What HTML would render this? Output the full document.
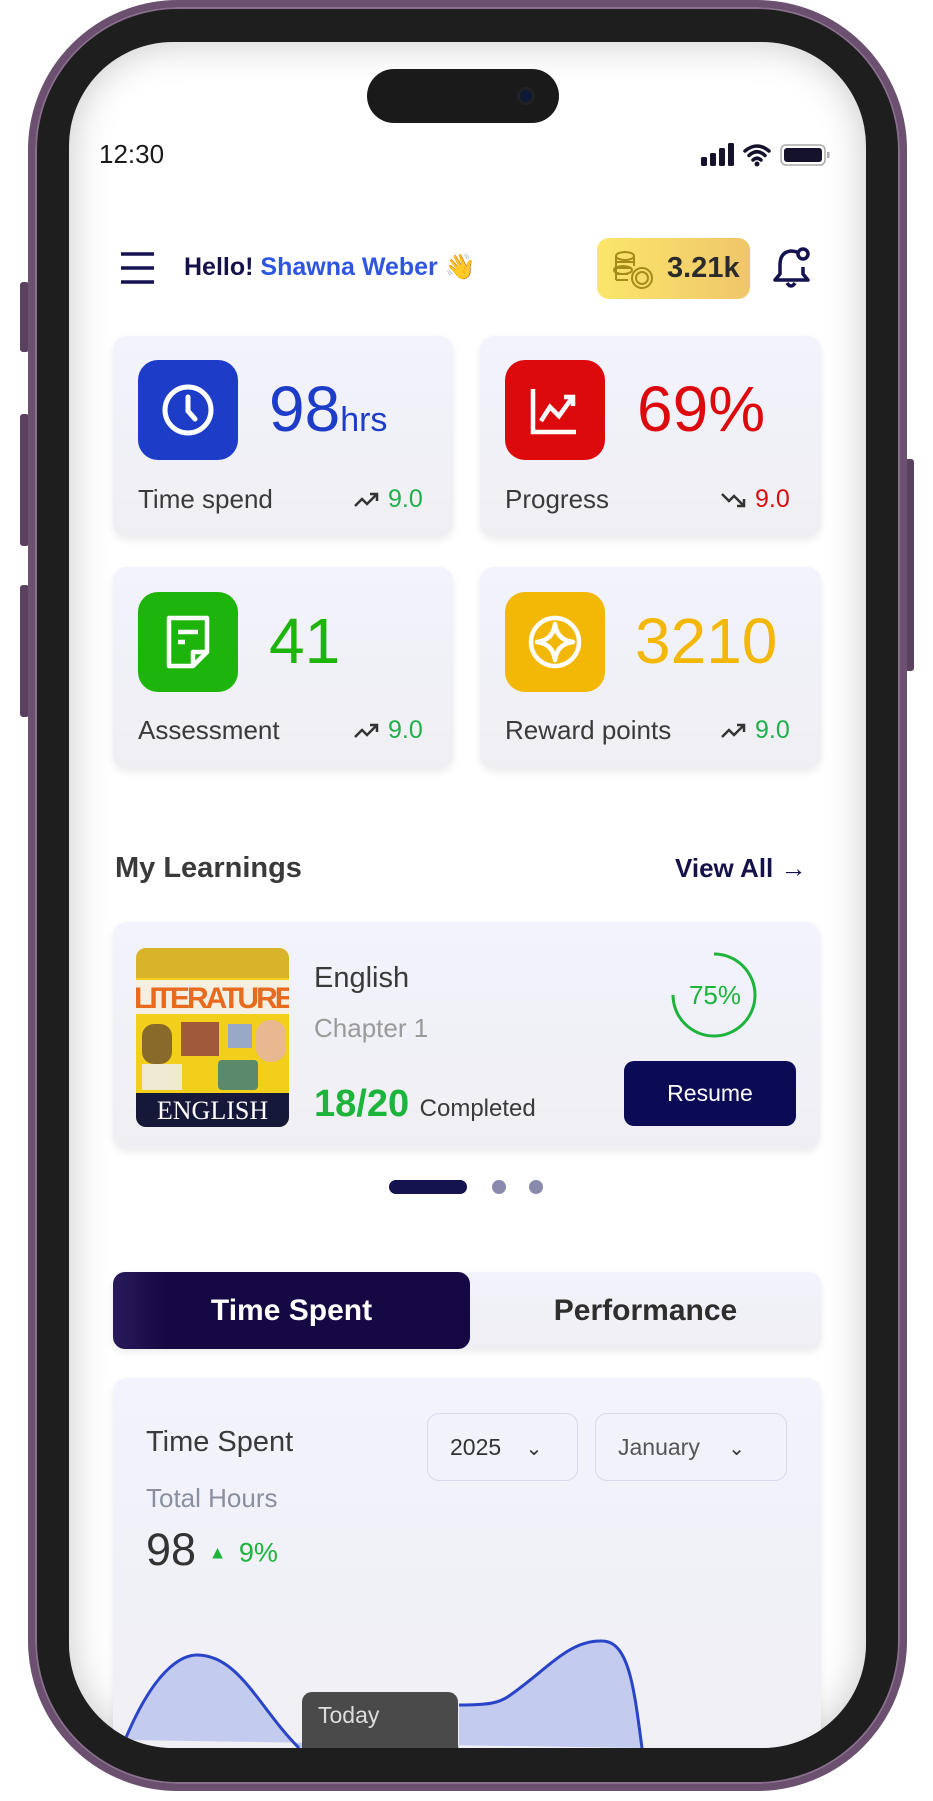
<!DOCTYPE html>
<html><head><meta charset="utf-8"><style>
*{margin:0;padding:0;box-sizing:border-box}
body{width:933px;height:1801px;background:#fff;position:relative;overflow:hidden;font-family:"Liberation Sans",sans-serif}
.abs{position:absolute}
.frame{left:28px;top:0;width:879px;height:1791px;border-radius:150px;background:#1e1e1e;border:7px solid #6b5070;box-shadow:inset 0 0 0 2px #8a6e8e}
.btn{background:#5b4160;border-radius:3px}
.screen{left:69px;top:42px;width:797px;height:1706px;border-radius:104px;background:#fff;overflow:hidden;box-shadow:inset 0 0 40px rgba(0,0,0,.22)}
.card{background:linear-gradient(#f2f3fc,#efeff3);border-radius:14px;box-shadow:0 3px 8px rgba(0,0,0,.08)}
.ib{width:100px;height:100px;border-radius:20px;display:flex;align-items:center;justify-content:center}
.num{font-size:64px;line-height:1}
.lbl{font-size:26px;color:#3a3a3a}
.trend{font-size:25px;display:flex;align-items:center;gap:8px}
</style></head><body>
<div class="abs btn" style="left:20px;top:282px;width:9px;height:70px"></div>
<div class="abs btn" style="left:20px;top:414px;width:9px;height:132px"></div>
<div class="abs btn" style="left:20px;top:585px;width:9px;height:132px"></div>
<div class="abs btn" style="left:905px;top:459px;width:9px;height:212px"></div>
<div class="abs frame"></div>
<div class="abs screen">
<div class="abs" style="left:298px;top:27px;width:192px;height:54px;border-radius:27px;background:#1a1a1a"></div>
<div class="abs" style="left:448px;top:45px;width:18px;height:18px;border-radius:50%;background:#0d1a35;border:3px solid #222"></div>
<div class="abs" style="left:30px;top:97px;font-size:26px;color:#1a1a1a">12:30</div>
<svg class="abs" style="left:632px;top:100px" width="146" height="26" viewBox="0 0 146 26">
<rect x="0" y="15" width="6" height="9" rx="1.5" fill="#15122b"/><rect x="9" y="11" width="6" height="13" rx="1.5" fill="#15122b"/><rect x="18" y="6" width="6" height="18" rx="1.5" fill="#15122b"/><rect x="27" y="1" width="6" height="23" rx="1.5" fill="#15122b"/>
<path d="M44 9 Q56 -1 68 9 M48 13.5 Q56 6 64 13.5 M52 18 Q56 14.5 60 18" stroke="#15122b" stroke-width="3.5" fill="none" stroke-linecap="round"/><circle cx="56" cy="22" r="2.5" fill="#15122b"/>
<rect x="80" y="3" width="44" height="20" rx="5" fill="none" stroke="#aaa" stroke-width="1.5"/><rect x="83" y="6" width="38" height="14" rx="3" fill="#15122b"/><rect x="126" y="10" width="2.5" height="6" fill="#aaa"/>
</svg>
<svg class="abs" style="left:50px;top:209px" width="37" height="34"><path d="M2 3h33M2 17h33M2 31h33" stroke="#14124f" stroke-width="3.5"/></svg>
<div class="abs" style="left:115px;top:211px;font-size:25px;font-weight:bold;color:#15124a">Hello! <span style="color:#2f56e0">Shawna Weber</span> 👋</div>
<div class="abs" style="left:528px;top:196px;width:153px;height:61px;border-radius:12px;background:linear-gradient(90deg,#fbe66a,#efc66a)"></div>
<svg class="abs" style="left:541px;top:208px" width="46" height="40" viewBox="0 0 46 40" fill="none" stroke="#a48a18" stroke-width="2"><ellipse cx="15" cy="6" rx="9" ry="4"/><path d="M6 6v24M24 6v10M6 12h18M6 18h14M6 24h12M6 30h12"/><ellipse cx="13" cy="20" rx="9" ry="4"/><circle cx="32" cy="28" r="10"/><circle cx="32" cy="28" r="6"/></svg>
<div class="abs" style="left:598px;top:210px;font-size:29px;font-weight:bold;color:#2b2b2b">3.21k</div>
<svg class="abs" style="left:704px;top:203px" width="40" height="46" viewBox="0 0 40 46" fill="none" stroke="#14124f" stroke-width="3.5"><path d="M24 7 Q20 6 18 6 Q7 7 7 20v9l-5 6h33l-5-6v-7" stroke-linejoin="round"/><path d="M14 38q4 6 8 0"/><circle cx="30" cy="9" r="5"/></svg>

<div class="abs card" style="left:44px;top:294px;width:340px;height:201px"></div>
<div class="abs card" style="left:411px;top:294px;width:341px;height:201px"></div>
<div class="abs card" style="left:44px;top:525px;width:340px;height:202px"></div>
<div class="abs card" style="left:411px;top:525px;width:341px;height:202px"></div>
<div class="abs ib" style="left:69px;top:318px;background:#1d3dc9"><svg width="56" height="56" viewBox="0 0 56 56" fill="none" stroke="#fff" stroke-width="5"><circle cx="28" cy="28" r="23"/><path d="M28 15v14l7 8" stroke-linecap="round"/></svg></div>
<div class="abs num" style="left:200px;top:335px;color:#1d3dc9">98<span style="font-size:34px">hrs</span></div>
<div class="abs lbl" style="left:69px;top:442px">Time spend</div>
<div class="abs trend" style="left:285px;top:443px;color:#1fb04a"><svg width="26" height="16" viewBox="0 0 26 16" fill="none" stroke="#333" stroke-width="2.5"><path d="M1 14l7-7 5 5 10-10M16 2h7v7"/></svg>9.0</div>

<div class="abs ib" style="left:436px;top:318px;background:#dd0a0d"><svg width="54" height="54" viewBox="0 0 54 54" fill="none" stroke="#fff" stroke-width="4.5"><path d="M5 6v43h43"/><path d="M13 38l9-14 9 9 13-18M36 14h9v9"/></svg></div>
<div class="abs num" style="left:568px;top:335px;color:#dd0a0d">69%</div>
<div class="abs lbl" style="left:436px;top:442px">Progress</div>
<div class="abs trend" style="left:652px;top:443px;color:#dd0a0d"><svg width="26" height="16" viewBox="0 0 26 16" fill="none" stroke="#333" stroke-width="2.5"><path d="M1 2l7 7 5-5 10 10M16 14h7V7"/></svg>9.0</div>

<div class="abs ib" style="left:69px;top:550px;background:#1db40c"><svg width="50" height="56" viewBox="0 0 50 56" fill="none" stroke="#fff" stroke-width="4.5" stroke-linejoin="round"><path d="M6 4h38v34L30 52H6z M30 52V38h14"/><path d="M15 18h20M15 28h7"/></svg></div>
<div class="abs num" style="left:200px;top:567px;color:#1db40c">41</div>
<div class="abs lbl" style="left:69px;top:673px">Assessment</div>
<div class="abs trend" style="left:285px;top:674px;color:#1fb04a"><svg width="26" height="16" viewBox="0 0 26 16" fill="none" stroke="#333" stroke-width="2.5"><path d="M1 14l7-7 5 5 10-10M16 2h7v7"/></svg>9.0</div>

<div class="abs ib" style="left:436px;top:550px;background:#f3b705"><svg width="56" height="56" viewBox="0 0 56 56" fill="none" stroke="#fff" stroke-width="4.5"><circle cx="28" cy="28" r="24"/><path d="M28 10Q30 26 46 28Q30 30 28 46Q26 30 10 28Q26 26 28 10z" stroke-linejoin="round"/></svg></div>
<div class="abs num" style="left:566px;top:567px;color:#f3b705">3210</div>
<div class="abs lbl" style="left:436px;top:673px">Reward points</div>
<div class="abs trend" style="left:652px;top:674px;color:#1fb04a"><svg width="26" height="16" viewBox="0 0 26 16" fill="none" stroke="#333" stroke-width="2.5"><path d="M1 14l7-7 5 5 10-10M16 2h7v7"/></svg>9.0</div>

<div class="abs" style="left:46px;top:810px;font-size:29px;font-weight:bold;color:#3a3a3a">My Learnings</div>
<div class="abs" style="left:606px;top:811px;font-size:26px;font-weight:bold;color:#15124a">View All →</div>

<div class="abs card" style="left:44px;top:880px;width:707px;height:227px"></div>
<div class="abs" style="left:67px;top:906px;width:153px;height:179px;border-radius:10px;overflow:hidden;background:#f1cf1b">
 <div class="abs" style="left:0;top:0;width:153px;height:30px;background:#d9b42a"></div>
 <div class="abs" style="left:0;top:32px;width:153px;height:34px;background:#f4efe0"></div>
 <div class="abs" style="left:-2px;top:34px;font-size:30px;font-weight:bold;color:#e86a1e;letter-spacing:-3px;font-family:'Liberation Sans Narrow','Liberation Sans',sans-serif">LITERATURE</div>
 <div class="abs" style="left:6px;top:76px;width:30px;height:40px;background:#8a6a2a;border-radius:12px"></div>
 <div class="abs" style="left:45px;top:74px;width:38px;height:34px;background:#a05a3a"></div>
 <div class="abs" style="left:92px;top:76px;width:24px;height:24px;background:#9aa8c8"></div>
 <div class="abs" style="left:120px;top:72px;width:30px;height:42px;background:#e8b890;border-radius:14px"></div>
 <div class="abs" style="left:6px;top:116px;width:40px;height:26px;background:#f0ead0"></div>
 <div class="abs" style="left:82px;top:112px;width:40px;height:30px;background:#5a8a6a;border-radius:4px"></div>
 <div class="abs" style="left:0;top:145px;width:153px;height:34px;background:#16183a;color:#fff;font-family:'Liberation Serif',serif;font-size:26px;text-align:center;line-height:36px">ENGLISH</div>
</div>
<div class="abs" style="left:245px;top:920px;font-size:29px;color:#3a3a3a">English</div>
<div class="abs" style="left:245px;top:971px;font-size:26px;color:#9a9a9a">Chapter 1</div>
<div class="abs" style="left:245px;top:1041px;font-size:38px;font-weight:bold;color:#1db43c">18/20 <span style="font-size:24px;font-weight:normal;color:#3a3a3a">Completed</span></div>
<svg class="abs" style="left:598px;top:906px" width="94" height="94" viewBox="0 0 94 94"><circle cx="47" cy="47" r="41" fill="none" stroke="#1db43c" stroke-width="3" stroke-dasharray="193 258" transform="rotate(-90 47 47)"/><text x="48" y="56" text-anchor="middle" font-size="26" fill="#1db43c" font-family="Liberation Sans">75%</text></svg>
<div class="abs" style="left:555px;top:1019px;width:172px;height:65px;border-radius:10px;background:#0a0a55;color:#fff;font-size:23px;text-align:center;line-height:65px">Resume</div>
<div class="abs" style="left:320px;top:1138px;width:78px;height:14px;border-radius:7px;background:#14124f"></div>
<div class="abs" style="left:423px;top:1138px;width:14px;height:14px;border-radius:50%;background:#8a8aac"></div>
<div class="abs" style="left:460px;top:1138px;width:14px;height:14px;border-radius:50%;background:#8a8aac"></div>

<div class="abs card" style="left:44px;top:1230px;width:708px;height:77px;border-radius:12px"></div>
<div class="abs" style="left:44px;top:1230px;width:357px;height:77px;border-radius:12px;background:linear-gradient(90deg,#2a1a5a,#160843 15%);color:#fff;font-size:30px;font-weight:bold;text-align:center;line-height:77px">Time Spent</div>
<div class="abs" style="left:401px;top:1230px;width:351px;height:77px;color:#2e2e2e;font-size:30px;font-weight:bold;text-align:center;line-height:77px">Performance</div>

<div class="abs card" style="left:44px;top:1336px;width:708px;height:420px"></div>
<div class="abs" style="left:77px;top:1384px;font-size:29px;color:#3a3a3a">Time Spent</div>
<div class="abs" style="left:358px;top:1371px;width:151px;height:68px;border:1.5px solid #d8d9ea;border-radius:12px;font-size:23px;color:#333;line-height:66px;padding-left:22px">2025 <span style="margin-left:18px;font-size:20px">⌄</span></div>
<div class="abs" style="left:526px;top:1371px;width:192px;height:68px;border:1.5px solid #d8d9ea;border-radius:12px;font-size:23px;color:#555;line-height:66px;padding-left:22px">January <span style="margin-left:22px;font-size:20px;color:#333">⌄</span></div>
<div class="abs" style="left:77px;top:1441px;font-size:26px;color:#8a8f9f">Total Hours</div>
<div class="abs" style="left:77px;top:1482px;font-size:45px;color:#333">98 <span style="font-size:18px;color:#1db43c;vertical-align:middle">▲</span> <span style="font-size:27px;color:#1db43c;vertical-align:middle">9%</span></div>
<svg class="abs" style="left:0;top:0" width="797" height="1706">
<path d="M56 1698 C90 1616,120 1613,128 1613 C170 1613,190 1666,230 1706 L390 1706 L390 1663 C420 1663,430 1661,440 1654 C480 1626,500 1598,533 1599 C560 1599,565 1646,573 1706 Z" fill="#c3cbef"/>
<path d="M56 1698 C90 1616,120 1613,128 1613 C170 1613,190 1666,230 1706 M390 1663 C420 1663,430 1661,440 1654 C480 1626,500 1598,533 1599 C560 1599,565 1646,573 1706" fill="none" stroke="#2a44c8" stroke-width="3"/>
</svg>
<div class="abs" style="left:233px;top:1650px;width:156px;height:70px;border-radius:10px;background:#4a4a4a;color:#ddd;font-size:23px;padding:10px 16px">Today</div>
</div>
</body></html>
